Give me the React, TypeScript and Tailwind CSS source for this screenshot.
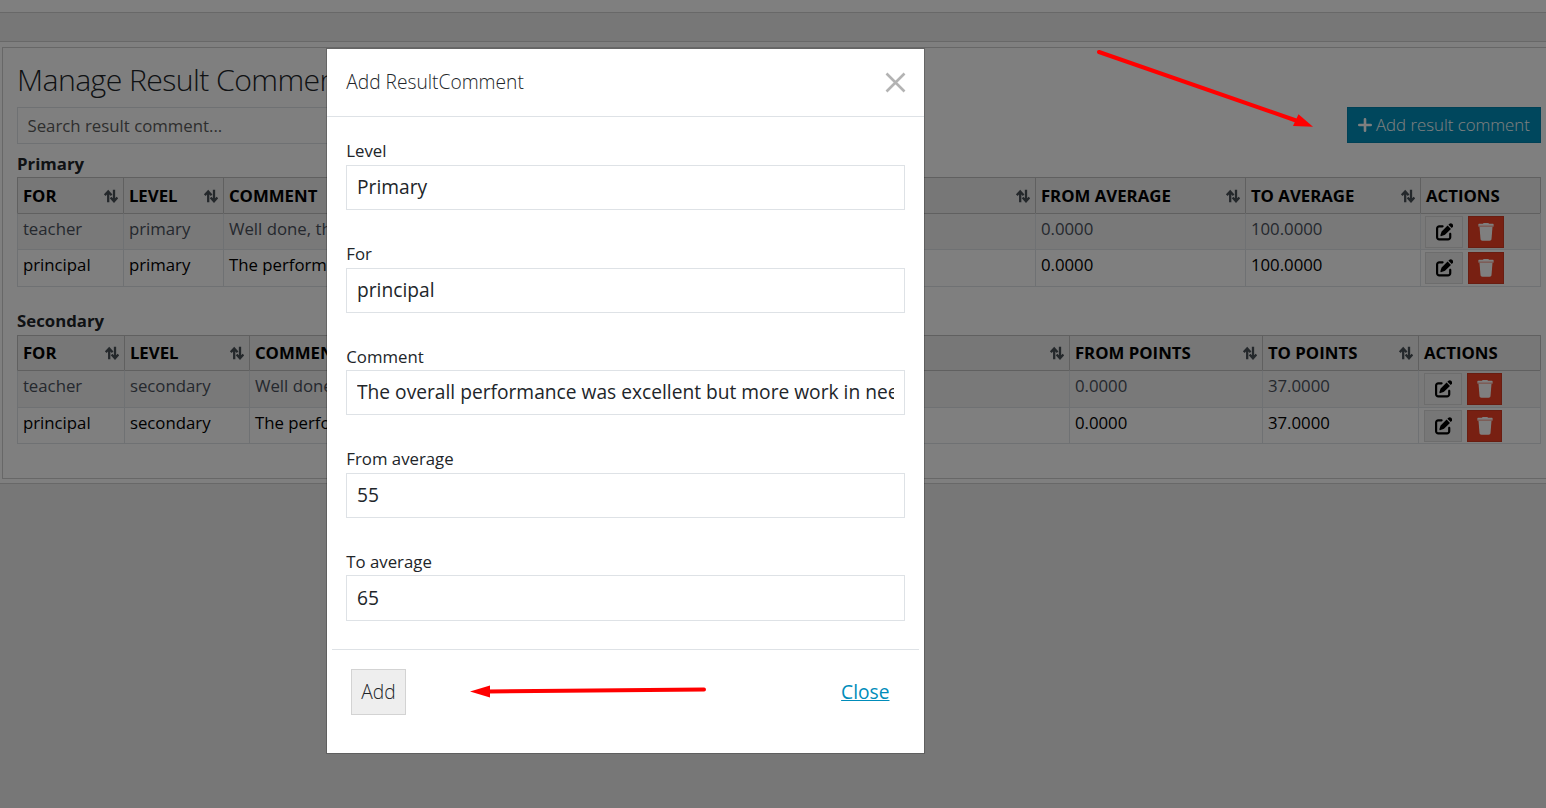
import { FaPenToSquare } from "react-icons/fa6";

type Row = string[];

function SortIcon() {
  return (
    <svg className="h-[14px] w-[14px] shrink-0 text-[#495057]" viewBox="0 0 14 14" fill="none" stroke="currentColor" strokeWidth="2.3">
      <path d="M4.200 13.300V2.500M.8 6.200 4.200 2.400 7.600 6.200" />
      <path d="M10 .8v11M6.600 8.500 10 12.300l3.400-3.800" />
    </svg>
  );
}

function TrashIcon() {
  return (
    <svg className="h-[18px] w-4" viewBox="0 0 16 18" fill="currentColor">
      <path d="M5 .8 5.600 0h4.800l.6.800h3.500c.8 0 1.200.5 1.200 1.100v.9H.3v-.9C.3 1.300.7.800 1.500.800Z" />
      <path d="M.3 2.800h15.400v1H.3Z" opacity=".65" />
      <path d="M1.500 3.800h13l-1 12.300c-.1 1-.8 1.700-1.800 1.700H4.300c-1 0-1.700-.7-1.800-1.700Z" />
    </svg>
  );
}

interface TableProps {
  cols: string;
  heads: string[];
  rows: Row[];
  rowHeights: string[];
  headPad: string;
  actionPad: string;
  deleteWidth: string;
}

function DataTable({ cols, heads, rows, rowHeights, headPad, actionPad, deleteWidth }: TableProps) {
  return (
    <div className="w-[1524px] border-r border-b border-[#dee2e6] text-[16.8px] leading-[25px]">
      <div className={`grid ${cols} ${rowHeights[0]} -mr-px border-r border-[#c0c0c0] bg-[#eee]`}>
        {heads.map((h, i) => (
          <div key={h} className={`flex items-start justify-between border-t border-l border-[#c0c0c0] pr-[5px] font-bold text-black ${headPad}`}>
            <span className="whitespace-nowrap">{h}</span>
            {i < heads.length - 1 && (
              <span className="flex h-[26px] items-center">
                <SortIcon />
              </span>
            )}
          </div>
        ))}
      </div>
      {rows.map((r, n) => (
        <div key={n} className={`grid ${cols} ${rowHeights[n + 1]} ${n === 0 ? "bg-[#f2f2f2] text-[#4a515c]" : "text-black"}`}>
          {r.map((c, i) => (
            <div key={i} className={`overflow-hidden border-t border-l pt-[2px] pl-[4.9px] whitespace-nowrap ${n === 0 ? "border-t-[#c0c0c0] border-l-[#dee2e6]" : "border-[#dee2e6]"}`}>
              {c}
            </div>
          ))}
          <div className={`flex gap-[5px] border-t border-l pt-[2px] ${actionPad} ${n === 0 ? "border-t-[#c0c0c0] border-l-[#dee2e6]" : "border-[#dee2e6]"}`}>
            <button className={`flex h-8 w-[38px] items-center justify-center border border-[#dadada] pl-px text-black ${n === 0 ? "bg-[#f2f2f2]" : "bg-[#eee]"}`}>
              <FaPenToSquare size={17.500} />
            </button>
            <button className={`flex h-8 items-center justify-center border border-[#d33a22] bg-[#f04124] text-white ${deleteWidth}`}>
              <TrashIcon />
            </button>
          </div>
        </div>
      ))}
    </div>
  );
}

interface FieldProps {
  label: string;
  value: string;
  className: string;
  labelClass?: string;
  inputClass?: string;
}

function Field({ label, value, className, labelClass = "leading-[23px]", inputClass = "h-[45px] pb-[2px]" }: FieldProps) {
  return (
    <label className={`flex flex-col ${className}`}>
      <span className={`h-[25px] pl-[0.3px] text-[16.8px] ${labelClass}`}>{label}</span>
      <input readOnly value={value} className={`w-full border border-[#dee2e6] px-[10px] text-[19.2px] outline-none ${inputClass}`} />
    </label>
  );
}

export default function App() {
  return (
    <div className="relative h-[808px] w-[1546px] overflow-hidden bg-[#eee] font-['Open_Sans',sans-serif] text-[#212529]">
      <header className="h-[13px] border-b border-[#d0d0d0] bg-white" />
      <div className="h-[29px] border-b border-[#d0d0d0]" />
      <main className="h-[442px] border-b border-[#d0d0d0] bg-white pt-[5px] pl-[2px]">
        <section className="h-[432px] border-y border-l border-[#cfcfcf] pl-[14px]">
          <h1 className="mt-[11px] h-[48px] text-[30.24px] leading-[42px] font-light tracking-[-0.6px]">Manage Result Comments</h1>
          <div className="flex w-[1524px] justify-between">
            <input readOnly placeholder="Search result comment..." className="h-[37px] w-[500px] border border-[#dee2e6] px-[9.500px] text-[16.8px] outline-none placeholder:text-[#5c5c5c]" />
            <button className="flex h-9 w-[194px] items-center gap-1 border border-[#0082ad] bg-[#008fbb] pl-[10px] text-[16.8px] font-light whitespace-nowrap text-white">
              <svg className="h-[14px] w-[14px] shrink-0" viewBox="0 0 14 14" stroke="currentColor" strokeWidth="2.6" strokeLinecap="round">
                <path d="M7 1.300v11.400M1.300 7h11.400" />
              </svg>
              Add result comment
            </button>
          </div>
          <h2 className="mt-[7px] h-[26px] text-[16.8px] leading-[25px] font-bold">Primary</h2>
          <DataTable
            cols="grid-cols-[106px_100px_812px_210px_175px_120px]"
            rowHeights={["h-[36px]", "h-[36px]", "h-[37px]"]}
            headPad="pt-[5px] pl-[4.9px]"
            actionPad="pl-1"
            deleteWidth="w-9"
            heads={["FOR", "LEVEL", "COMMENT", "FROM AVERAGE", "TO AVERAGE", "ACTIONS"]}
            rows={[
              ["teacher", "primary", "Well done, this is a good result", "0.0000", "100.0000"],
              ["principal", "primary", "The performance was good", "0.0000", "100.0000"],
            ]}
          />
          <h2 className="mt-[21px] h-[27px] text-[16.8px] leading-[25px] font-bold">Secondary</h2>
          <DataTable
            cols="grid-cols-[107px_125px_820px_193px_156px_122px]"
            rowHeights={["h-[35px]", "h-[37px]", "h-[36px]"]}
            headPad="pt-1 pl-[4.9px]"
            actionPad="pl-[5px]"
            deleteWidth="w-[35px]"
            heads={["FOR", "LEVEL", "COMMENT", "FROM POINTS", "TO POINTS", "ACTIONS"]}
            rows={[
              ["teacher", "secondary", "Well done, this is a good result", "0.0000", "37.0000"],
              ["principal", "secondary", "The performance was good", "0.0000", "37.0000"],
            ]}
          />
        </section>
      </main>

      <div className="absolute inset-0 bg-black/50 pt-[49px] pl-[327px]">
        <div className="h-[704px] w-[597px] bg-white shadow-[0_0_0_1px_rgba(0,0,0,0.2)]">
          <div className="flex h-[68px] items-center justify-between border-b border-[#dee2e6] pr-[18px] pl-[19.200px]">
            <span className="text-[19.2px] font-light">Add ResultComment</span>
            <svg className="h-[21px] w-[21px]" viewBox="0 0 21 21" stroke="#b3b3b3" strokeWidth="2.6">
              <path d="M1.500 1.500l18 18M19.500 1.500l-18 18" />
            </svg>
          </div>
          <div className="flex h-[532px] flex-col px-[19px] pt-[23px]">
            <Field label="Level" value="Primary" className="h-[103px]" labelClass="leading-[21px]" />
            <Field label="For" value="principal" className="h-[102px]" labelClass="leading-[21px]" />
            <Field label="Comment" value="The overall performance was excellent but more work in needed" className="h-[103px]" />
            <Field label="From average" value="55" className="h-[102px]" labelClass="leading-[21px]" />
            <Field label="To average" value="65" className="h-[71px]" inputClass="h-[46px] pb-px" />
          </div>
          <div className="mx-[5px] flex items-start justify-between border-t border-[#dee2e6] pt-[19px] pr-[29.500px] pl-[19px]">
            <button className="h-[46px] w-[55px] border border-[#d3d3d3] bg-[#eee] text-[19.2px] font-light">Add</button>
            <a className="mt-2 text-[19.2px] leading-[29px] text-[#008cba] underline">Close</a>
          </div>
        </div>
      </div>

      <svg className="pointer-events-none absolute inset-0 h-full w-full" viewBox="0 0 1546 808" stroke="#f00" fill="#f00">
        <path d="M1099 52 1296 120.500" strokeWidth="4" strokeLinecap="round" />
        <path d="M1313 126.700 1293 126 1298.500 114.300Z" stroke="none" />
        <path d="M704 689.500 488 691.500" strokeWidth="4" strokeLinecap="round" />
        <path d="M470 691.500 490 685.500V697.500Z" stroke="none" />
      </svg>
    </div>
  );
}
